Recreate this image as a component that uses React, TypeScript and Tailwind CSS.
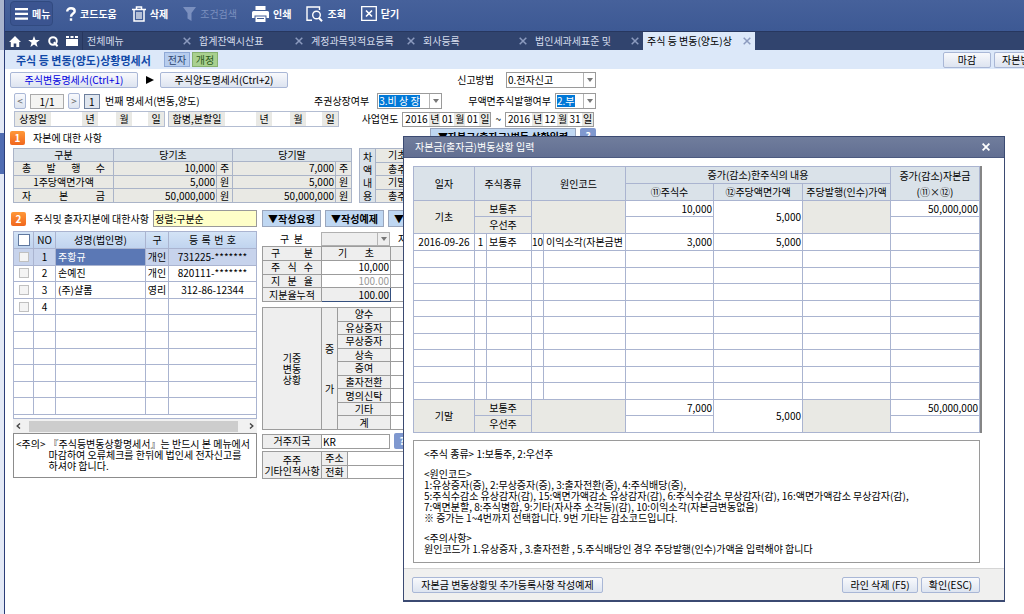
import type { ReactNode } from "react";

const tabs = [
  "전체메뉴",
  "합계잔액시산표",
  "계정과목및적요등록",
  "회사등록",
  "법인세과세표준 및",
  "주식 등 변동(양도)상",
];

const capital = [
  { label: "총 발 행 수", first: "10,000", last: "7,000", unit: "주" },
  { label: "1주당액면가액", first: "5,000", last: "5,000", unit: "원" },
  { label: "자 본 금", first: "50,000,000", last: "50,000,000", unit: "원" },
];

const holders = [
  { name: "주황규", kind: "개인", reg: "731225-*******" },
  { name: "손예진", kind: "개인", reg: "820111-*******" },
  { name: "(주)샬롬", kind: "영리", reg: "312-86-12344" },
  { name: "", kind: "", reg: "" },
];

const increases = [
  "양수",
  "유상증자",
  "무상증자",
  "상속",
  "증여",
  "출자전환",
  "명의신탁",
  "기타",
  "계",
];

const emptyRows = (count: number) => Array.from({ length: count }, (_, i) => i);

function TabClose() {
  return (
    <svg viewBox="0 0 8 8" className="w-2 h-2 stroke-[#8c9bbf]" strokeWidth="1.5">
      <path d="M0.7 0.7l6.6 6.6M7.3 0.7l-6.6 6.6" />
    </svg>
  );
}

function ToolButton({
  icon,
  label,
  className,
  disabled,
}: {
  icon: ReactNode;
  label: string;
  className?: string;
  disabled?: boolean;
}) {
  return (
    <button
      disabled={disabled}
      className={`flex items-center gap-1 font-bold text-white disabled:font-normal disabled:text-[#7b90bf] ${className ?? ""}`}
    >
      {icon}
      {label}
    </button>
  );
}

function Toolbar() {
  return (
    <div className="h-[31px] flex items-start gap-[15px] pl-[5px] pt-px bg-linear-to-b from-[#46619b] to-[#3d5994]">
      <ToolButton
        label="메뉴"
        className="h-[25px] w-[43px] pl-1 rounded-sm border border-[#314a80] bg-[#3b5490]"
        icon={
          <svg viewBox="0 0 13 12" className="w-[13px] h-3 fill-white">
            <path d="M0 0h13v2.2H0zM0 4.8h13V7H0zM0 9.6h13v2.2H0z" />
          </svg>
        }
      />
      <ToolButton
        label="코드도움"
        className="h-[25px] -ml-[2px]"
        icon={
          <svg viewBox="0 0 10 14" className="w-[10px] h-[14px]" fill="none" stroke="white" strokeWidth="2.4">
            <path d="M1.2 4.6C1.2 2.3 2.8 1.3 5 1.3S8.700 2.300 8.700 4.200C8.700 6.500 5 6.500 5 9.700" />
            <path d="M5 11.300v2.500" />
          </svg>
        }
      />
      <ToolButton
        label="삭제"
        className="h-[25px]"
        icon={
          <svg viewBox="0 0 14 16" className="w-[14px] h-4" fill="none" stroke="white" strokeWidth="1.500">
            <path d="M0 3.500h14M4.500 3V1h5v2M2 4v11h10V4" />
            <path d="M5 6v7M7 6v7M9 6v7" strokeWidth="1.200" />
          </svg>
        }
      />
      <ToolButton
        label="조건검색"
        className="h-[25px]"
        disabled
        icon={
          <svg viewBox="0 0 13 14" className="w-[13px] h-[14px] fill-[#7b90bf]">
            <path d="M0 0h13L8.500 6v8l-4-2.500V6z" />
          </svg>
        }
      />
      <ToolButton
        label="인쇄"
        className="h-[25px]"
        icon={
          <svg viewBox="0 0 17 16" className="w-[17px] h-4 fill-white">
            <path d="M3.500 0h10v4h-10zM1.500 5h14A1.500 1.500 0 0 1 17 6.500V12h-2.500V9.500h-12V12H0V6.500A1.500 1.500 0 0 1 1.500 5z" />
            <path d="M3.500 10.500h10V16h-10zM5 12v1h7v-1z" fillRule="evenodd" />
          </svg>
        }
      />
      <ToolButton
        label="조회"
        className="h-[25px]"
        icon={
          <svg viewBox="0 0 17 16" className="w-[17px] h-4" fill="none" stroke="white" strokeWidth="1.400">
            <path d="M6 14.300H1V1h12.500v3" />
            <circle cx="10.500" cy="9" r="3.800" />
            <path d="M13 12l3 3.200" strokeWidth="2" />
          </svg>
        }
      />
      <ToolButton
        label="닫기"
        className="h-[25px]"
        icon={
          <svg viewBox="0 0 16 15" className="w-4 h-[15px]" fill="none" stroke="white" strokeWidth="1.300">
            <path d="M0.700 0.700h14.600v13.600H0.700z" />
            <path d="M5 4.500l6 6M11 4.500l-6 6" strokeWidth="1.700" />
          </svg>
        }
      />
    </div>
  );
}

function TabBar() {
  return (
    <nav className="h-[19px] flex items-stretch bg-[#31446e] border-t border-[#27375f] text-[#d5dcec]">
      <div className="w-[78px] flex items-center justify-around border-r border-[#27375f]">
        <button aria-label="홈">
          <svg viewBox="0 0 12 11" className="w-3 h-[11px] fill-white">
            <path d="M6 0l6 6h-1.800v5H7.300V7.500H4.700V11H1.800V6H0z" />
          </svg>
        </button>
        <button aria-label="즐겨찾기">
          <svg viewBox="0 0 12 11" className="w-3 h-[11px] fill-white">
            <path d="M6 0l1.500 3.900 4.300.2-3.400 2.600L9.600 11 6 8.600 2.400 11l1.200-4.300L.2 4.100l4.300-.2z" />
          </svg>
        </button>
        <button aria-label="검색">
          <svg viewBox="0 0 11 11" className="w-[11px] h-[11px]" fill="none" stroke="white" strokeWidth="2">
            <circle cx="5" cy="5" r="3.800" />
            <path d="M5.800 6.200l3.800 4" />
          </svg>
        </button>
        <button aria-label="목록">
          <svg viewBox="0 0 12 10" className="w-3 h-[10px] fill-white">
            <path d="M0 0h3v2H0zM4.500 0h3v2h-3zM9 0h3v2H9zM0 3h12v7H0z" />
          </svg>
        </button>
      </div>
      {tabs.map((tab, i) => (
        <div
          key={tab}
          className={`w-28 flex items-center justify-between px-1 ${
            i === tabs.length - 1 ? "bg-[#dce8f9] text-black" : ""
          }`}
        >
          <a href="#" className="whitespace-nowrap">
            {tab}
          </a>
          <button aria-label="탭 닫기">
            <TabClose />
          </button>
        </div>
      ))}
    </nav>
  );
}

function GrayButton({ children, className }: { children: ReactNode; className?: string }) {
  return (
    <button
      className={`h-4 rounded-xs border border-[#a9b7d6] bg-linear-to-b from-[#f8f9fc] to-[#dde4f0] whitespace-nowrap ${className ?? ""}`}
    >
      {children}
    </button>
  );
}

function BlueButton({ children, className }: { children: ReactNode; className?: string }) {
  return (
    <button
      className={`h-[17px] border border-[#9aa6bd] bg-[#bfd7f2] font-bold whitespace-nowrap overflow-hidden ${className ?? ""}`}
    >
      {children}
    </button>
  );
}

function HelpButton() {
  return (
    <button className="w-4 h-4 rounded-xs bg-[#7f98cf] text-white font-bold">?</button>
  );
}

function Picker({
  id,
  value,
  className,
  selected,
}: {
  id: string;
  value: string;
  className: string;
  selected?: boolean;
}) {
  return (
    <div className={`h-4 flex items-center border border-[#9a9a9a] bg-white ${className}`}>
      <div className="flex-1 pl-px">
        <select
          id={id}
          className={`block appearance-none leading-3 ${selected ? "bg-[#0078d7] text-white" : ""}`}
        >
          <option>{value}</option>
        </select>
      </div>
      <Arrow />
    </div>
  );
}

function Arrow() {
  return (
    <span className="w-3 h-full flex items-center justify-center border-l border-[#b5b5b5] pointer-events-none">
      <svg viewBox="0 0 6 4" className="w-[6px] h-1 fill-[#777]">
        <path d="M0 0h6L3 4z" />
      </svg>
    </span>
  );
}

function DateBox({ name, date }: { name: string; date: [string, string, string] }) {
  const unit = "flex items-center justify-center w-[11px] bg-[#e9e9e5]";
  return (
    <div className="h-[15px] flex border border-[#9a9a9a]">
      <input aria-label={`${name} 년`} defaultValue={date[0]} className="w-[26px] text-center" />
      <span className={unit}>년</span>
      <input aria-label={`${name} 월`} defaultValue={date[1]} className="w-[14px] text-center" />
      <span className={unit}>월</span>
      <input aria-label={`${name} 일`} defaultValue={date[2]} className="w-[14px] text-center" />
      <span className={unit}>일</span>
    </div>
  );
}

function EmptyDate({ label, className }: { label: string; className: string }) {
  const unit = "w-4 flex items-center justify-center bg-[#e9e9e5]";
  return (
    <div className="h-4 flex border border-[#b3bdd2]">
      <span className={`flex items-center justify-center bg-[#e9e9e5] ${className}`}>{label}</span>
      <input aria-label={`${label} 년`} className="w-[31px]" />
      <span className={unit}>년</span>
      <input aria-label={`${label} 월`} className="w-[18px]" />
      <span className={unit}>월</span>
      <input aria-label={`${label} 일`} className="w-4" />
      <span className={unit}>일</span>
    </div>
  );
}

function Badge({ children }: { children: ReactNode }) {
  return (
    <span className="w-[15px] h-[14px] flex items-center justify-center rounded-xs bg-linear-to-b from-[#ff9838] to-[#f0661c] text-white font-bold">
      {children}
    </span>
  );
}

function FormHeader() {
  return (
    <div className="w-[586px] ml-[5px] pt-[2px]">
      <div className="h-[18px] mb-[3px] flex items-center justify-between">
        <div className="flex items-center gap-2">
          <GrayButton className="w-32 text-[#0000e0]">주식변동명세서(Ctrl+1)</GrayButton>
          <svg viewBox="0 0 8 8" className="w-2 h-2 fill-black">
            <path d="M0 0l8 4-8 4z" />
          </svg>
          <GrayButton className="w-32 ml-[-2px]">주식양도명세서(Ctrl+2)</GrayButton>
        </div>
        <div className="flex items-center gap-3">
          <label htmlFor="report">신고방법</label>
          <Picker id="report" value="0.전자신고" className="w-[90px]" />
        </div>
      </div>

      <div className="h-[18px] mb-px flex items-center justify-between pl-1">
        <div className="flex items-center gap-1">
          <GrayButton className="w-3 text-[#666]">&lt;</GrayButton>
          <input
            aria-label="페이지"
            defaultValue="1/1"
            className="w-[34px] h-[15px] border border-[#aaa] bg-[#f4f4f2] text-center"
          />
          <GrayButton className="w-3 text-[#666]">&gt;</GrayButton>
          <input
            id="sheet"
            defaultValue="1"
            className="w-4 h-[15px] pl-1 border border-[#6d7f9c] bg-[#dfe6ef]"
          />
          <label htmlFor="sheet" className="ml-px">
            번째 명세서(변동,양도)
          </label>
        </div>
        <div className="flex items-center">
          <label htmlFor="listed" className="mr-2">
            주권상장여부
          </label>
          <Picker id="listed" value="3.비 상 장" className="w-[65px] mr-[26px]" selected />
          <label htmlFor="nopar" className="mr-1">
            무액면주식발행여부
          </label>
          <Picker id="nopar" value="2.부" className="w-[41px]" selected />
        </div>
      </div>

      <div className="h-4 flex items-center justify-between pl-1 pr-[2px]">
        <div className="flex gap-[3px]">
          <EmptyDate label="상장일" className="w-9" />
          <EmptyDate label="합병,분할일" className="w-14" />
        </div>
        <div className="flex items-center gap-1">
          <span>사업연도</span>
          <DateBox name="시작" date={["2016", "01", "01"]} />
          <span>~</span>
          <DateBox name="종료" date={["2016", "12", "31"]} />
        </div>
      </div>

      <div className="h-[21px] flex justify-between">
        <div className="flex items-center gap-2">
          <Badge>1</Badge>
          <h2>자본에 대한 사항</h2>
        </div>
        <div className="flex items-start gap-1 pt-px">
          <BlueButton className="w-[146px]">▼자본금(출자금)변동 상황입력</BlueButton>
          <HelpButton />
        </div>
      </div>
    </div>
  );
}

function CapitalTables() {
  const cell = "border border-[#aab4c8]";
  return (
    <div className="flex gap-[7px] ml-2">
      <table className="w-[339px] h-[55px] table-fixed bg-[#e9e9e4]">
        <colgroup>
          <col className="w-[100px]" />
          <col className="w-[103px]" />
          <col className="w-4" />
          <col className="w-[103px]" />
          <col className="w-4" />
        </colgroup>
        <thead className="bg-[#dae2e9]">
          <tr>
            <th className={`${cell} font-normal`}>구분</th>
            <th colSpan={2} className={`${cell} font-normal`}>
              당기초
            </th>
            <th colSpan={2} className={`${cell} font-normal`}>
              당기말
            </th>
          </tr>
        </thead>
        <tbody>
          {capital.map((row, i) => (
            <tr key={row.label}>
              <th
                className={`${cell} px-2 font-normal ${i === 1 ? "text-center" : "[text-align-last:justify]"}`}
              >
                {row.label}
              </th>
              <td className={`${cell} pr-px text-right`}>{row.first}</td>
              <td className={`${cell} text-center`}>{row.unit}</td>
              <td className={`${cell} pr-px text-right`}>{row.last}</td>
              <td className={`${cell} text-center`}>{row.unit}</td>
            </tr>
          ))}
        </tbody>
      </table>

      <table className="w-[237px] h-[55px] table-fixed bg-[#e9e9e4]">
        <colgroup>
          <col className="w-4" />
          <col className="w-[90px]" />
          <col />
        </colgroup>
        <tbody>
          {["기초", "총주식수", "기말", "총주식수"].map((label, i) => (
            <tr key={i}>
              {i === 0 && (
                <th rowSpan={4} className={`${cell} bg-[#dae2e9] font-normal leading-[13px]`}>
                  차
                  <br />
                  액<br />
                  내<br />용
                </th>
              )}
              <th className={`${cell} pl-3 text-left font-normal`}>{label}</th>
              <td className={cell} />
            </tr>
          ))}
        </tbody>
      </table>
    </div>
  );
}

function HolderList() {
  const cell = "border border-[#aab4d0]";
  return (
    <div className="w-[244px] ml-2">
      <div className="h-[17px] -ml-[2px] mb-1 flex items-center gap-2">
        <Badge>2</Badge>
        <label htmlFor="sort" className="w-[111px] whitespace-nowrap">
          주식및 출자지분에 대한사항
        </label>
        <input
          id="sort"
          defaultValue="정렬:구분순"
          className="flex-1 min-w-0 h-[17px] px-px border border-[#9a9a9a] bg-[#ffffc8]"
        />
      </div>

      <table className="w-full h-[184px] table-fixed">
        <colgroup>
          <col className="w-5" />
          <col className="w-[22px]" />
          <col className="w-[90px]" />
          <col className="w-[23px]" />
          <col />
        </colgroup>
        <thead>
          <tr className="h-[17px] bg-linear-to-b from-[#d3e3f6] to-[#bfd3ee]">
            <th className={cell}>
              <input
                type="checkbox"
                aria-label="전체 선택"
                className="block mx-auto w-3 h-3 appearance-none border border-[#60789f] bg-white"
              />
            </th>
            <th className={`${cell} font-normal`}>NO</th>
            <th className={`${cell} font-normal`}>성명(법인명)</th>
            <th className={`${cell} font-normal`}>구</th>
            <th className={`${cell} px-5 font-normal [text-align-last:justify]`}>등 록 번 호</th>
          </tr>
        </thead>
        <tbody>
          {holders.map((holder, i) => (
            <tr key={i} className={i === 0 ? "bg-[#c7d3ec]" : ""}>
              <td className={cell}>
                <input
                  type="checkbox"
                  aria-label={`${i + 1}번 선택`}
                  className="block mx-auto w-[10px] h-[10px] appearance-none border border-[#c0c0c0] bg-[#f4f4f4]"
                />
              </td>
              <td className={`${cell} text-center`}>{i + 1}</td>
              <td className={`${cell} px-[2px] ${i === 0 ? "bg-[#5b78b5] text-white" : ""}`}>
                {holder.name}
              </td>
              <td className={`${cell} text-center`}>{holder.kind}</td>
              <td className={`${cell} text-center`}>{holder.reg}</td>
            </tr>
          ))}
          {emptyRows(6).map((i) => (
            <tr key={i}>
              <td className={cell}>&nbsp;</td>
              <td className={cell} />
              <td className={cell} />
              <td className={cell} />
              <td className={cell} />
            </tr>
          ))}
        </tbody>
      </table>

      <div className="h-1 border-x border-b border-[#aab4d0]" />
      <div className="h-[14px] flex items-center justify-between px-[3px] bg-[#f1f1f1]">
        <svg viewBox="0 0 5 6" className="w-[5px] h-[6px]" fill="none" stroke="#444" strokeWidth="1.400">
          <path d="M4 0.500L1.200 3 4 5.500" />
        </svg>
        <div className="w-[209px] h-[11px] mr-1 bg-[#cdcdcd]" />
        <svg viewBox="0 0 5 6" className="w-[5px] h-[6px]" fill="none" stroke="#444" strokeWidth="1.400">
          <path d="M1 0.500L3.800 3 1 5.500" />
        </svg>
      </div>

      <div className="h-[45px] flex gap-[3px] pl-[2px] pt-1 border border-[#8c8c8c] leading-[11px] whitespace-nowrap overflow-hidden">
        <span>&lt;주의&gt;</span>
        <p>
          『주식등변동상황명세서』는 반드시 본 메뉴에서
          <br />
          마감하여 오류체크를 한뒤에 법인세 전자신고를
          <br />
          하셔야 합니다.
        </p>
      </div>
    </div>
  );
}

function HolderDetail() {
  const line = "border border-[#9c9c9c]";
  const head = `${line} bg-[#eeeeee] font-normal`;
  return (
    <div className="w-[334px]">
      <div className="flex gap-1 mb-[5px]">
        <BlueButton className="w-[59px]">▼작성요령</BlueButton>
        <BlueButton className="w-[59px]">▼작성예제</BlueButton>
        <BlueButton className="w-[59px]">▼유의사항</BlueButton>
      </div>

      <div className="h-[14px] flex items-center">
        <label htmlFor="kind" className="w-[59px] text-center whitespace-pre">
          {"구  분"}
        </label>
        <div className="w-[69px] h-[14px] flex border border-[#b0b0b0] bg-[#eeeeee]">
          <select id="kind" className="flex-1 min-w-0 appearance-none">
            <option> </option>
          </select>
          <Arrow />
        </div>
        <span className="ml-2">자료구분</span>
      </div>

      <table className="w-full h-14 table-fixed">
        <colgroup>
          <col className="w-[59px]" />
          <col className="w-[69px]" />
          <col />
        </colgroup>
        <tbody>
          <tr>
            <th className={`${head} px-2 [text-align-last:justify]`}>구 분</th>
            <th className={`${head} px-4 [text-align-last:justify]`}>기 초</th>
            <th className={head} />
          </tr>
          <tr>
            <th className={`${head} px-2 [text-align-last:justify]`}>주 식 수</th>
            <td className={`${line} pr-px text-right`}>10,000</td>
            <td className={line} />
          </tr>
          <tr>
            <th className={`${head} px-2 [text-align-last:justify]`}>지 분 율</th>
            <td className={`${line} pr-px text-right text-[#999]`}>100.00</td>
            <td className={line} />
          </tr>
          <tr>
            <th className={head}>지분율누적</th>
            <td className="border border-[#35507f] bg-[#eeeeee] pr-px text-right">100.00</td>
            <td className={line} />
          </tr>
        </tbody>
      </table>

      <table className="w-full h-[123px] mt-[5px] table-fixed">
        <colgroup>
          <col className="w-[59px]" />
          <col className="w-4" />
          <col className="w-[53px]" />
          <col />
        </colgroup>
        <tbody>
          {increases.map((label, i) => (
            <tr key={label}>
              {i === 0 && (
                <>
                  <th rowSpan={9} className={`${head} leading-[11px]`}>
                    기중
                    <br />
                    변동
                    <br />
                    상황
                  </th>
                  <th rowSpan={9} className={head}>
                    <span className="block pb-7">증</span>
                    <span className="block">가</span>
                  </th>
                </>
              )}
              <th className={head}>{label}</th>
              <td className={line} />
            </tr>
          ))}
        </tbody>
      </table>

      <div className="flex mt-[3px] items-center">
        <label htmlFor="country" className={`w-[60px] h-[15px] text-center ${head}`}>
          거주지국
        </label>
        <input id="country" defaultValue="KR" className={`w-[69px] h-[15px] px-px -ml-px mr-1 ${line}`} />
        <HelpButton />
      </div>

      <table className="w-full h-7 mt-[2px] table-fixed">
        <colgroup>
          <col className="w-[59px]" />
          <col className="w-[26px]" />
          <col />
        </colgroup>
        <tbody>
          <tr>
            <th rowSpan={2} className={`${head} leading-[11px]`}>
              주주
              <br />
              기타인적사항
            </th>
            <th className={head}>주소</th>
            <td className={line} />
          </tr>
          <tr>
            <th className={head}>전화</th>
            <td className={line} />
          </tr>
        </tbody>
      </table>
    </div>
  );
}

function BalanceRows({ label, shares, amount }: { label: string; shares: string; amount: string }) {
  const cell = "border border-[#aab4d0]";
  const gray = `${cell} bg-[#e9e9e4] font-normal`;
  return (
    <>
      <tr className="h-4">
        <th rowSpan={2} className={gray}>
          {label}
        </th>
        <th colSpan={2} className={gray}>
          보통주
        </th>
        <td rowSpan={2} colSpan={2} className={gray} />
        <td className={`${cell} pr-px text-right`}>{shares}</td>
        <td rowSpan={2} className={`${cell} pr-px text-right`}>
          5,000
        </td>
        <td rowSpan={2} className={gray} />
        <td className={`${cell} pr-px text-right`}>{amount}</td>
      </tr>
      <tr className="h-[17px]">
        <th colSpan={2} className={gray}>
          우선주
        </th>
        <td className={cell} />
        <td className={cell} />
      </tr>
    </>
  );
}

function CapitalDialog() {
  const cell = "border border-[#aab4d0]";
  const head = `${cell} font-normal`;
  return (
    <div
      role="dialog"
      aria-label="자본금(출자금)변동상황 입력"
      className="absolute left-[403px] top-[136px] w-[602px] border border-b-2 border-[#3b4a72] bg-white"
    >
      <div className="h-[21px] flex items-center justify-between pl-[11px] pr-[14px] border-b border-[#4c5a80] bg-linear-to-b from-[#707d9c] to-[#626f92] text-white">
        <h2>자본금(출자금)변동상황 입력</h2>
        <button aria-label="닫기">
          <svg viewBox="0 0 8 8" className="w-2 h-2 stroke-white" strokeWidth="1.800">
            <path d="M0.600 0.600l6.800 6.800M7.400 0.600l-6.800 6.800" />
          </svg>
        </button>
      </div>

      <div className="px-[9px] pt-2 pb-[5px]">
        <div className="mr-[13px] border-r-2 border-[#858585]">
          <table className="w-full table-fixed">
            <colgroup>
              <col className="w-[61px]" />
              <col className="w-3" />
              <col className="w-[45px]" />
              <col className="w-3" />
              <col className="w-[82px]" />
              <col className="w-[88px]" />
              <col className="w-[89px]" />
              <col className="w-[88px]" />
              <col />
            </colgroup>
            <thead className="bg-[#dae2e9]">
              <tr className="h-[17px]">
                <th rowSpan={2} className={head}>
                  일자
                </th>
                <th rowSpan={2} colSpan={2} className={head}>
                  주식종류
                </th>
                <th rowSpan={2} colSpan={2} className={head}>
                  원인코드
                </th>
                <th colSpan={3} className={head}>
                  증가(감소)한주식의 내용
                </th>
                <th rowSpan={2} className={`${head} leading-4`}>
                  증가(감소)자본금
                  <br />
                  (⑪×⑫)
                </th>
              </tr>
              <tr className="h-[17px]">
                <th className={head}>⑪주식수</th>
                <th className={head}>⑫주당액면가액</th>
                <th className={`${head} whitespace-nowrap`}>주당발행(인수)가액</th>
              </tr>
            </thead>
            <tbody>
              <BalanceRows label="기초" shares="10,000" amount="50,000,000" />
              <tr className="h-[17px]">
                <td className={`${cell} text-center`}>2016-09-26</td>
                <td className={`${cell} text-center`}>1</td>
                <td className={`${cell} px-[2px]`}>보통주</td>
                <td className={`${cell} text-center`}>10</td>
                <td className={`${cell} pl-[2px] whitespace-nowrap overflow-hidden`}>이익소각(자본금변</td>
                <td className={`${cell} pr-px text-right`}>3,000</td>
                <td className={`${cell} pr-px text-right`}>5,000</td>
                <td className={cell} />
                <td className={cell} />
              </tr>
              {emptyRows(9).map((i) => (
                <tr key={i} className={i % 2 === 0 ? "h-[17px]" : "h-4"}>
                  <td className={cell} />
                  <td className={cell} />
                  <td className={cell} />
                  <td className={cell} />
                  <td className={cell} />
                  <td className={cell} />
                  <td className={cell} />
                  <td className={cell} />
                  <td className={cell} />
                </tr>
              ))}
              <BalanceRows label="기말" shares="7,000" amount="50,000,000" />
            </tbody>
          </table>
        </div>

        <div className="h-[123px] mt-[7px] mr-[15px] pl-[10px] pt-[7px] flex flex-col gap-[9px] border border-[#9a9a9a] leading-[11px] whitespace-nowrap">
          <p>&lt;주식 종류&gt; 1:보통주, 2:우선주</p>
          <p>
            &lt;원인코드&gt;
            <br />
            1:유상증자(증), 2:무상증자(증), 3:출자전환(증), 4:주식배당(증),
            <br />
            5:주식수감소 유상감자(감), 15:액면가액감소 유상감자(감), 6:주식수감소 무상감자(감), 16:액면가액감소 무상감자(감),
            <br />
            7:액면분할, 8:주식병합, 9:기타(자사주 소각등)(감), 10:이익소각(자본금변동없음)
            <br />※ 증가는 1~4번까지 선택합니다. 9번 기타는 감소코드입니다.
          </p>
          <p>
            &lt;주의사항&gt;
            <br />
            원인코드가 1.유상증자 , 3.출자전환 , 5.주식배당인 경우 주당발행(인수)가액을 입력해야 합니다
          </p>
        </div>
      </div>

      <div className="h-8 flex items-center gap-[3px] pl-2 pr-6 border-t border-[#d5d5d5] bg-[#f0f0ef]">
        <GrayButton className="w-[191px] mr-auto">자본금 변동상황및 추가등록사항 작성예제</GrayButton>
        <GrayButton className="w-[76px]">라인 삭제 (F5)</GrayButton>
        <GrayButton className="w-[59px]">확인(ESC)</GrayButton>
      </div>
    </div>
  );
}

function App() {
  return (
    <div className="relative min-h-screen flex overflow-hidden bg-white text-black text-[10px] leading-3 font-['Noto_Sans_CJK_KR','Liberation_Sans',sans-serif]">
      <aside className="w-[5px] shrink-0 flex flex-col border-r border-[#2b3d78] bg-[#e3e9f6]">
        <div className="h-[50px] bg-[#a9b4cd]" />
        <div className="h-[41px] mt-[83px] bg-[#4f6cb2]" />
      </aside>

      <main className="flex-1 min-w-0">
        <Toolbar />
        <TabBar />
        <div className="h-[19px] flex items-center gap-[2px] pl-[11px] bg-[#dce8f9] overflow-hidden">
          <h1 className="w-[146px] text-[11px] font-bold text-[#1048a8] whitespace-nowrap">
            주식 등 변동(양도)상황명세서
          </h1>
          <span className="w-[26px] h-[15px] flex items-center justify-center border border-[#8fa9d6] bg-[#b7cdee] text-[#2b4470]">
            전자
          </span>
          <span className="w-[26px] h-[15px] flex items-center justify-center border border-[#86b070] bg-[#a9d08f] text-[#2c5a1c]">
            개정
          </span>
          <GrayButton className="w-12 ml-auto">마감</GrayButton>
          <GrayButton className="w-[30px] ml-px pl-[7px] border-r-0 rounded-r-none text-left overflow-hidden">
            자본변동
          </GrayButton>
        </div>

        <FormHeader />
        <CapitalTables />
        <div className="flex gap-[5px] mt-[7px]">
          <HolderList />
          <HolderDetail />
        </div>
      </main>

      <CapitalDialog />
    </div>
  );
}

export default App;
